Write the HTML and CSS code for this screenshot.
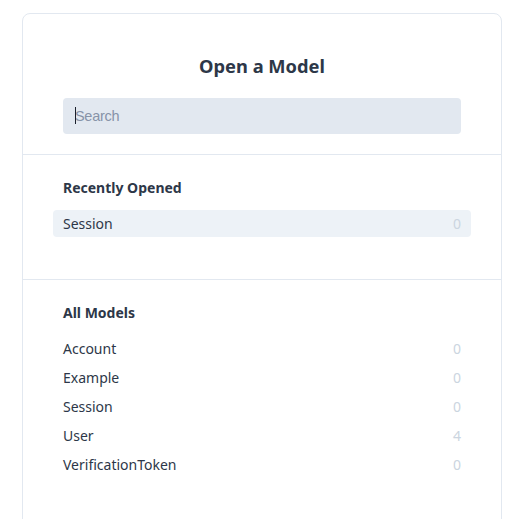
FILE: index.html
```html
<!DOCTYPE html>
<html>
<head>
<meta charset="utf-8">
<link rel="stylesheet" href="styles.css">
</head>
<body>
<div class="card">
  <div class="header">
    <h1 class="title">Open a Model</h1>
    <div class="search-wrap">
      <input class="search" type="text" placeholder="Search" autofocus>
      <span class="caret"></span>
    </div>
  </div>
  <div class="section">
    <h2 class="heading">Recently Opened</h2>
    <div class="list">
      <div class="row active"><span class="name">Session</span><span class="count">0</span></div>
    </div>
  </div>
  <div class="section">
    <h2 class="heading">All Models</h2>
    <div class="list">
      <div class="row"><span class="name">Account</span><span class="count">0</span></div>
      <div class="row"><span class="name">Example</span><span class="count">0</span></div>
      <div class="row"><span class="name">Session</span><span class="count">0</span></div>
      <div class="row"><span class="name">User</span><span class="count">4</span></div>
      <div class="row"><span class="name">VerificationToken</span><span class="count">0</span></div>
    </div>
  </div>
</div>
</body>
</html>
```
FILE: styles.css
```css
html, body {
  margin: 0;
  padding: 0;
  background: #ffffff;
}
body {
  padding: 13px 0 0 22px;
  font-family: "Noto Sans", "Open Sans", sans-serif;
  color: #2d3748;
}
.card {
  width: 478px;
  border: 1px solid #e2e8f0;
  border-radius: 8px;
  background: #fff;
  min-height: 600px;
}
.header {
  padding: 38px 40px 20px;
  border-bottom: 1px solid #e2e8f0;
  display: flex;
  flex-direction: column;
  align-items: stretch;
}
.title {
  margin: 0 0 18px;
  font-size: 18.3px;
  line-height: 28px;
  font-weight: 700;
  text-align: center;
  color: #2d3748;
}
.search-wrap {
  position: relative;
  display: flex;
}
.search {
  flex: 1;
  height: 36px;
  box-sizing: border-box;
  border: none;
  outline: none;
  border-radius: 4px;
  background: #e2e8f0;
  padding: 0 12px;
  font-family: "Liberation Sans", Arial, sans-serif;
  font-size: 14.5px;
  letter-spacing: -0.3px;
  color: #2d3748;
  caret-color: transparent;
}
.search::placeholder {
  color: #8793a8;
}
.caret {
  position: absolute;
  left: 12px;
  top: 9px;
  width: 1px;
  height: 17px;
  background: #1a202c;
}
.section {
  padding: 23px 30px 42px;
  border-bottom: 1px solid #e2e8f0;
}
.section:last-child {
  border-bottom: none;
}
.heading {
  margin: 0 0 12px;
  padding: 0 10px;
  font-size: 14px;
  line-height: 20px;
  font-weight: 700;
  color: #2d3748;
}
.list {
  display: flex;
  flex-direction: column;
  gap: 2px;
}
.row {
  display: flex;
  justify-content: space-between;
  align-items: center;
  padding: 3px 10px;
  line-height: 21px;
  font-size: 14px;
  border-radius: 4px;
}
.row.active {
  background: #edf2f7;
}
.count {
  color: #cbd5e0;
}
```
